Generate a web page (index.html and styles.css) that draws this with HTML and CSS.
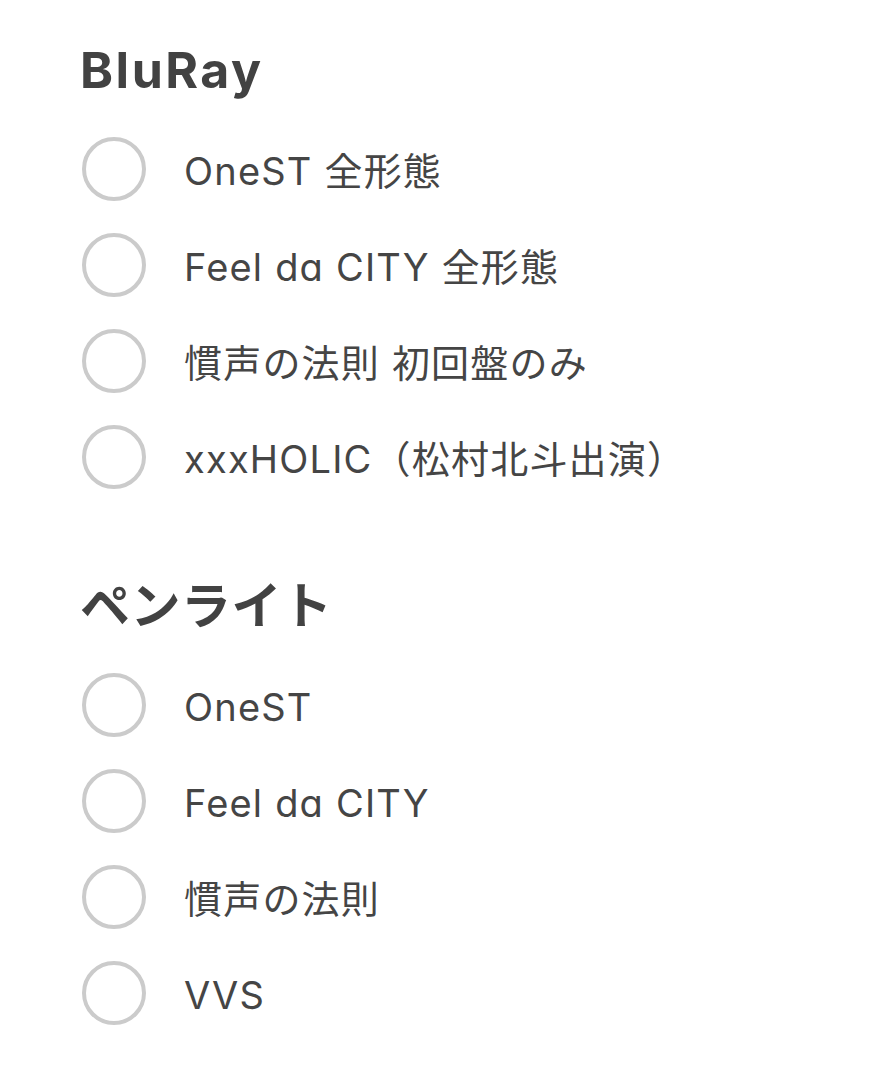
FILE: index.html
```html
<!DOCTYPE html>
<html lang="ja">
<head>
<meta charset="utf-8">
<link rel="stylesheet" href="styles.css">
</head>
<body>
<main class="page">
  <section class="group">
    <h2 class="group-title"><span class="latin">BluRay</span></h2>
    <ul class="options">
      <li class="option"><span class="radio"></span><span class="label">OneST 全形態</span></li>
      <li class="option"><span class="radio"></span><span class="label">Feel dɑ CITY 全形態</span></li>
      <li class="option"><span class="radio"></span><span class="label">慣声の法則 初回盤のみ</span></li>
      <li class="option"><span class="radio"></span><span class="label">xxxHOLIC（松村北斗出演）</span></li>
    </ul>
  </section>
  <section class="group">
    <h2 class="group-title">ペンライト</h2>
    <ul class="options">
      <li class="option"><span class="radio"></span><span class="label">OneST</span></li>
      <li class="option"><span class="radio"></span><span class="label">Feel dɑ CITY</span></li>
      <li class="option"><span class="radio"></span><span class="label">慣声の法則</span></li>
      <li class="option"><span class="radio"></span><span class="label">VVS</span></li>
    </ul>
  </section>
</main>
</body>
</html>
```
FILE: styles.css
```css
html, body {
  margin: 0;
  padding: 0;
  background: #ffffff;
}
body {
  font-family: "Inter", "Noto Sans CJK JP", sans-serif;
  color: #444444;
}
.page {
  padding: 40px 0 0 80px;
  display: flex;
  flex-direction: column;
  gap: 71px;
}
.group-title {
  margin: 0 0 21px 0;
  font-size: 50px;
  line-height: 60px;
  font-weight: 700;
  color: #424242;
  letter-spacing: 0.5px;
}
.group-title .latin {
  letter-spacing: 2.5px;
}
.options {
  list-style: none;
  margin: 0;
  padding: 0;
}
.option {
  height: 96px;
  display: flex;
  align-items: center;
}
.radio {
  box-sizing: border-box;
  width: 64px;
  height: 64px;
  margin-left: 2px;
  border: 4px solid #cbcbcb;
  border-radius: 50%;
  flex: none;
}
.label {
  margin-left: 38px;
  padding-top: 4px;
  font-size: 38px;
  line-height: 48px;
  letter-spacing: 1.2px;
  color: #454545;
}
```
